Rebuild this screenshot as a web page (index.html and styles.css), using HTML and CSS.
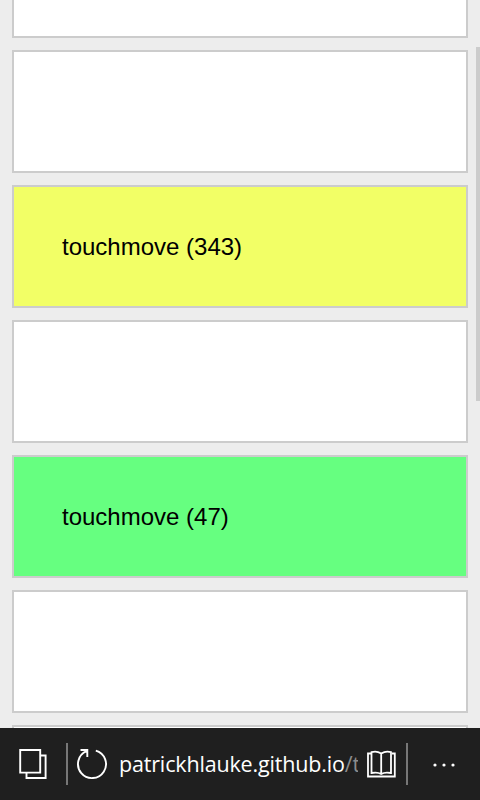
FILE: index.html
```html
<!DOCTYPE html>
<html lang="en">
<head>
<meta charset="utf-8">
<title>Touch events</title>
<link rel="stylesheet" href="styles.css">
</head>
<body>
<main class="page">
  <div class="box first"></div>
  <div class="box"></div>
  <div class="box yellow">touchmove (343)</div>
  <div class="box"></div>
  <div class="box green">touchmove (47)</div>
  <div class="box"></div>
  <div class="box"></div>
  <div class="scrollbar"></div>
</main>
<footer class="bar">
  <svg class="tabs" width="67" height="72" viewBox="0 0 67 72" fill="none" stroke="#fff" stroke-width="1.900"><path d="M20.200 22H40.200V44.600H20.200ZM40.500 27.500H45.600V50H26.500V45"/></svg>
  <i class="divider"></i>
  <svg class="reload" width="50" height="72" viewBox="68 0 50 72" fill="none" stroke="#fff" stroke-width="1.900"><path d="M95.800 22.600A14 14 0 1 1 86.500 23.200M80.500 22H87.300V29"/></svg>
  <div class="url"><span class="host">patrickhlauke.github.io</span><span class="path">/t</span></div>
  <svg class="book" width="48" height="72" viewBox="358 0 48 72" fill="none" stroke="#fff" stroke-width="1.800"><path d="M371 25.500H368V48.500H394.800V25.500H392M381.200 26V46M381.200 25.500Q376.500 22.500 371.500 24.200V45Q377.500 43.700 381.200 46Q385 43.700 391 45V24.200Q386 22.500 381.200 25.500"/></svg>
  <i class="divider"></i>
  <svg class="more" width="72" height="72" viewBox="408 0 72 72" fill="#fff"><circle cx="435" cy="37" r="1.600"/><circle cx="444" cy="37" r="1.600"/><circle cx="453" cy="37" r="1.600"/></svg>
</footer>
</body>
</html>
```
FILE: styles.css
```css
* { box-sizing: border-box; }
body {
  margin: 0;
  height: 800px;
  overflow: hidden;
  display: flex;
  flex-direction: column;
  background: #ededed;
  font-family: "Liberation Sans", Arial, sans-serif;
}
.page {
  position: relative;
  height: 728px;
  padding: 0 12px;
  overflow: hidden;
  display: flex;
  flex-direction: column;
  gap: 12px;
}
.box {
  flex: none;
  height: 123px;
  padding: 0 48px;
  border: 2px solid #ccc;
  background: #fff;
  font-size: 24px;
  line-height: 119px;
  color: #000;
}
.first { height: 38px; border-top: 0; }
.yellow { background: #f2ff66; }
.green { background: #66ff80; }
.scrollbar {
  position: absolute;
  top: 47px;
  right: 0;
  width: 4px;
  height: 354px;
  background: #ccc;
}
.bar {
  height: 72px;
  display: flex;
  align-items: center;
  background: #1f1f1f;
}
.bar svg { flex: none; }
.tabs { margin-right: -1px; }
.divider {
  flex: none;
  width: 2px;
  height: 42px;
  margin-top: -1px;
  background: #777;
}
.url {
  width: 240px;
  height: 36px;
  padding-left: 1px;
  overflow: hidden;
  white-space: nowrap;
  font-family: "Open Sans", "Noto Sans", sans-serif;
  font-size: 21.500px;
  line-height: 36px;
  letter-spacing: -0.170px;
  color: #fff;
}
.path { color: #8c8c8c; }
```
